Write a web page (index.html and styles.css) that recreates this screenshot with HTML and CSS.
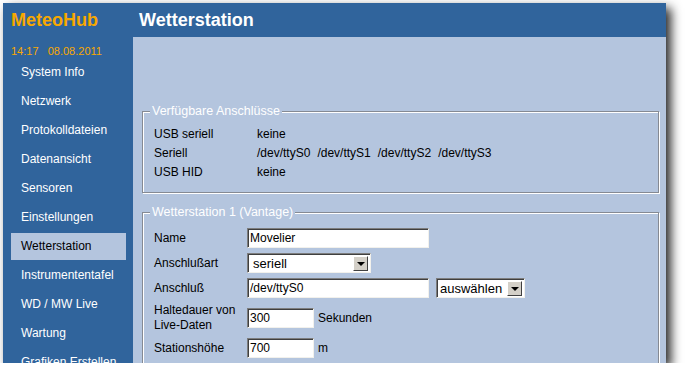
FILE: index.html
```html
<!DOCTYPE html>
<html lang="de">
<head>
    <meta charset="UTF-8">
    <title>MeteoHub - Wetterstation</title>
    <link rel="stylesheet" href="styles.css">
</head>
<body>
    <div class="window">
        <div class="sidebar">
            <div class="brand">MeteoHub</div>
            <div class="clock">14:17&nbsp;&nbsp;&nbsp;08.08.2011</div>
            <ul class="nav">
                <li>System Info</li>
                <li>Netzwerk</li>
                <li>Protokolldateien</li>
                <li>Datenansicht</li>
                <li>Sensoren</li>
                <li>Einstellungen</li>
                <li class="active">Wetterstation</li>
                <li>Instrumententafel</li>
                <li>WD / MW Live</li>
                <li>Wartung</li>
                <li>Grafiken Erstellen</li>
            </ul>
        </div>
        <div class="main">
            <div class="header">Wetterstation</div>
            <div class="content">
                <fieldset class="box ports-box">
                    <legend>Verfügbare Anschlüsse</legend>
                    <div class="ports">
                        <span>USB seriell</span><span>keine</span>
                        <span>Seriell</span><span class="devs"><span>/dev/ttyS0</span><span>/dev/ttyS1</span><span>/dev/ttyS2</span><span>/dev/ttyS3</span></span>
                        <span>USB HID</span><span>keine</span>
                    </div>
                </fieldset>

                <fieldset class="box">
                    <legend>Wetterstation 1 (Vantage)</legend>
                    <div class="form">
                        <label>Name</label>
                        <div><input type="text" class="wide" value="Movelier"></div>

                        <label>Anschlußart</label>
                        <div><span class="dropdown type"><span class="value">seriell</span><span class="arrow"></span></span></div>

                        <label>Anschluß</label>
                        <div class="line">
                            <input type="text" class="wide" value="/dev/ttyS0">
                            <span class="dropdown pick"><span class="value">auswählen</span><span class="arrow"></span></span>
                        </div>

                        <label>Haltedauer von<br>Live-Daten</label>
                        <div class="line"><input type="text" class="short" value="300"><span>Sekunden</span></div>

                        <label>Stationshöhe</label>
                        <div class="line"><input type="text" class="short" value="700"><span>m</span></div>
                    </div>
                </fieldset>
            </div>
        </div>
    </div>
</body>
</html>
```

FILE: styles.css
```css
html, body {
    margin: 0;
    padding: 0;
    background-color: #ffffff;
    font-family: "Liberation Sans", Arial, sans-serif;
    font-size: 12px;
}

body {
    padding: 3px 0 0 3px;
}

.window {
    display: flex;
    width: 663px;
    height: 360px;
    overflow: hidden;
    background-color: #30649c;
    box-shadow: 5px 5px 10px rgba(0, 0, 0, 0.85);
}

/* left navigation */
.sidebar {
    width: 130px;
    flex-shrink: 0;
    color: #ffffff;
}

.brand {
    height: 34px;
    line-height: 34px;
    padding-left: 8px;
    font-size: 18px;
    font-weight: bold;
    color: #f7a800;
}

.clock {
    margin-top: 7px;
    height: 14px;
    line-height: 14px;
    padding-left: 8px;
    font-size: 11px;
    color: #f7a800;
}

.nav {
    list-style: none;
    margin: 0;
    padding: 1px 0 0 0;
}

.nav li {
    margin: 0 7px 2px 8px;
    height: 27px;
    line-height: 27px;
    padding-left: 10px;
}

.nav li.active {
    background-color: #b4c5de;
    color: #000000;
}

/* main area */
.main {
    flex: 1;
    display: flex;
    flex-direction: column;
}

.header {
    height: 34px;
    line-height: 34px;
    padding-left: 6px;
    font-size: 18px;
    font-weight: bold;
    color: #ffffff;
}

.content {
    flex: 1;
    background-color: #b4c5de;
    padding: 67px 7px 0 9px;
}

.box {
    margin: 0 0 12px 0;
    padding: 4px 10px 11px 11px;
    border: 1px solid #858a93;
    box-shadow: inset 1px 1px 0 #ffffff, 1px 1px 0 #ffffff;
}

.ports-box {
    padding-top: 7px;
    padding-bottom: 10px;
}

.box legend {
    padding: 0 2px;
    margin-left: -4px;
    font-size: 12.5px;
    line-height: 14px;
    color: #ffffff;
    background-color: #b4c5de;
}

.ports {
    display: grid;
    grid-template-columns: 103px auto;
    line-height: 19px;
}

.devs span {
    margin-right: 7px;
}

.form {
    display: grid;
    grid-template-columns: 93px auto;
    row-gap: 5px;
    align-items: center;
    padding-top: 5px;
}

.form label {
    line-height: 15px;
}

.line {
    display: flex;
    align-items: center;
    gap: 4px;
}

input {
    box-sizing: border-box;
    height: 20px;
    margin: 0;
    padding: 0 2px;
    font-family: inherit;
    font-size: 12px;
    background-color: #ffffff;
    border: 1px solid;
    border-color: #7d7d7d #f2f1ec #f2f1ec #7d7d7d;
    box-shadow: inset 1px 1px 0 #3f3f3f;
    outline: none;
}

input.wide {
    width: 182px;
}

input.short {
    width: 67px;
}

.dropdown {
    box-sizing: border-box;
    display: inline-flex;
    align-items: center;
    height: 20px;
    background-color: #ffffff;
    border: 1px solid;
    border-color: #7d7d7d #f2f1ec #f2f1ec #7d7d7d;
    box-shadow: inset 1px 1px 0 #3f3f3f;
}

.dropdown .value {
    flex: 1;
    padding-left: 5px;
    font-size: 13px;
}

.dropdown.type {
    width: 124px;
}

.dropdown.pick {
    width: 89px;
    margin-left: 3px;
}

.dropdown.pick .value {
    padding-left: 3px;
}

.arrow {
    position: relative;
    width: 15px;
    height: 15px;
    margin-right: 2px;
    background-color: #d4d0c8;
    border: 1px solid;
    border-color: #ffffff #404040 #404040 #ffffff;
    box-sizing: border-box;
}

.arrow::after {
    content: "";
    position: absolute;
    left: 3px;
    top: 5px;
    border-left: 4px solid transparent;
    border-right: 4px solid transparent;
    border-top: 4px solid #000000;
}
```
